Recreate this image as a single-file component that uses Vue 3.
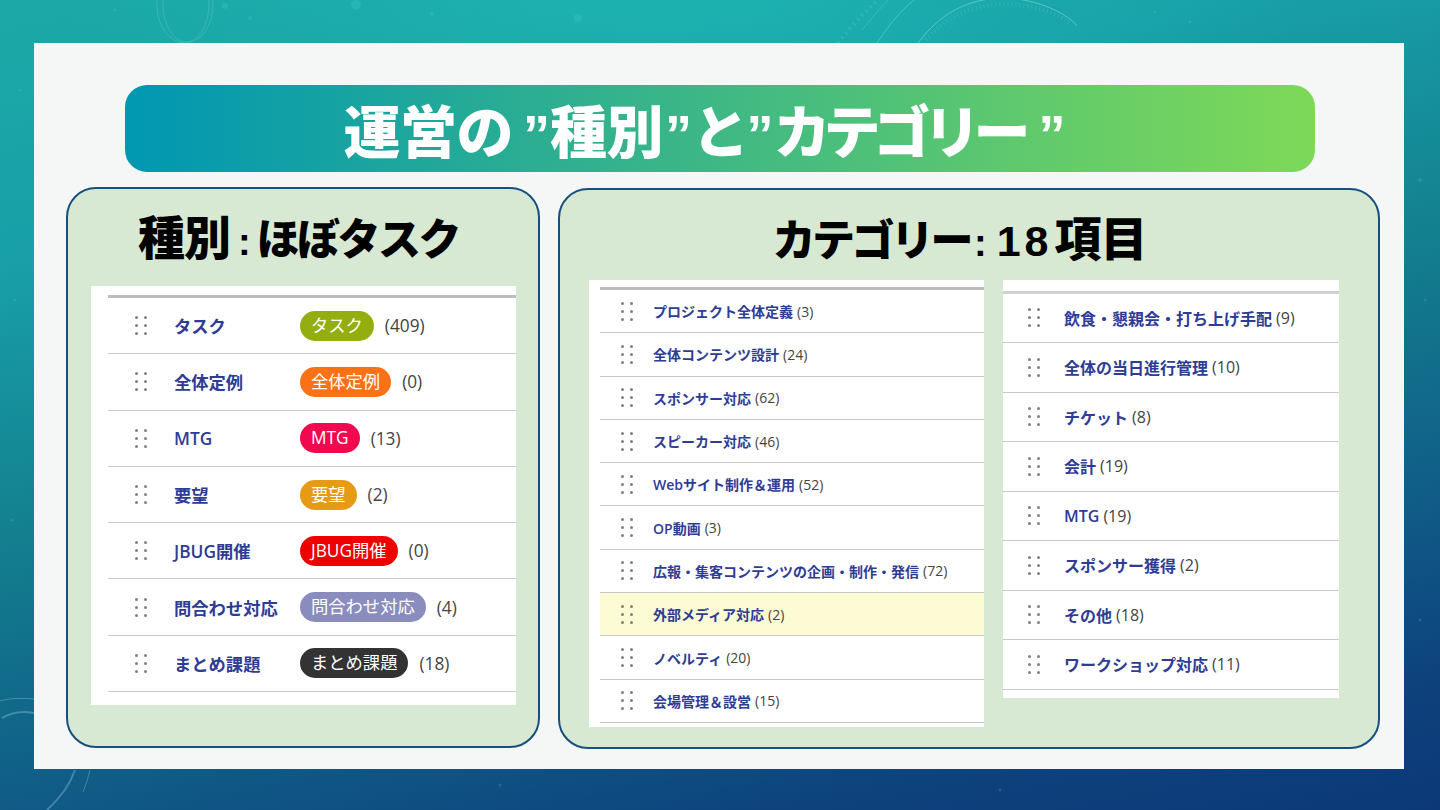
<script setup>
const kinds = [
  { name: 'タスク', color: '#93ae0e', count: 409 },
  { name: '全体定例', color: '#fb7216', count: 0 },
  { name: 'MTG', color: '#f0094f', count: 13 },
  { name: '要望', color: '#e59b14', count: 2 },
  { name: 'JBUG開催', color: '#ee0000', count: 0 },
  { name: '問合わせ対応', color: '#8a8cbd', count: 4 },
  { name: 'まとめ課題', color: '#333333', count: 18 }
]
const catsA = [
  ['プロジェクト全体定義', 3], ['全体コンテンツ設計', 24], ['スポンサー対応', 62], ['スピーカー対応', 46],
  ['Webサイト制作＆運用', 52], ['OP動画', 3], ['広報・集客コンテンツの企画・制作・発信', 72],
  ['外部メディア対応', 2], ['ノベルティ', 20], ['会場管理＆設営', 15]
]
const catsB = [
  ['飲食・懇親会・打ち上げ手配', 9], ['全体の当日進行管理', 10], ['チケット', 8], ['会計', 19],
  ['MTG', 19], ['スポンサー獲得', 2], ['その他', 18], ['ワークショップ対応', 11]
]
const specks = [
  [225, 6, 3], [356, 5, 5], [250, 18, 2], [115, 10, 1.5], [578, 18, 4], [432, 14, 2], [1390, 100, 1.5], [1425, 300, 1.5],
  [1420, 180, 2], [15, 300, 1.5], [20, 90, 1.5], [12, 520, 1.5], [1420, 620, 1.5], [1000, 790, 1.5], [500, 785, 1.5], [1155, 12, 1.5], [1190, 22, 1.5]
]
</script>

<template>
  <div class="slide">
    <svg class="deco" width="1440" height="810" viewBox="0 0 1440 810" fill="none" aria-hidden="true">
      <g stroke="#bff3ea" stroke-opacity=".18" stroke-width="1">
        <ellipse cx="185" cy="5" rx="28" ry="38" />
        <ellipse cx="186" cy="4" rx="23" ry="38" />
        <path d="M838 43C850 28 862 14 880 -2" stroke-dasharray="2 4" stroke-width="4" stroke-opacity=".12" />
        <path d="M877 43C892 20 905 6 922 -6" stroke-opacity=".3" />
        <path d="M862 30C872 18 880 8 890 -2" stroke-opacity=".2" />
        <path d="M918 43C940 14 965 0 1000 -2C1040 -2 1070 16 1077 26" stroke-opacity=".38" />
        <path d="M926 40C948 16 970 6 1000 4C1035 4 1060 14 1070 24" stroke-dasharray="1 3" stroke-width="4" stroke-opacity=".14" />
      </g>
      <g stroke="#bfe0f0" stroke-opacity=".3" fill="none">
        <path d="M0 701C10 698 22 698 34 699" />
        <path d="M2 718C12 712 24 711 34 713" stroke-width="2" />
        <path d="M75 770C70 785 60 798 47 810" stroke-width="2" />
        <path d="M90 770C88 778 86 785 83 792" />
      </g>
      <g fill="#4fd8d0" fill-opacity=".22">
        <circle v-for="(s, i) in specks" :key="i" :cx="s[0]" :cy="s[1]" :r="s[2]" />
      </g>
    </svg>
    <main class="panel">
      <h1 class="banner"><span class="banner-text">運営の<b class="q q-1">”</b>種別<b class="q q-2">”</b>と<b class="q q-3">”</b><span class="kata">カテゴリー</span><b class="q q-4">”</b></span></h1>
      <div class="cards">
        <section class="card card-left">
          <h2 class="card-title"><span class="kanji">種別</span><span class="colon">:</span>ほぼタスク</h2>
          <div class="shot shot-kinds">
            <ul class="list list-kinds">
              <li v-for="k in kinds" :key="k.name" class="row">
                <span class="grip"><i v-for="n in 6" :key="n"></i></span>
                <span class="name name-kind">{{ k.name }}</span>
                <span class="badge" :style="{ background: k.color }">{{ k.name }}</span>
                <span class="count count-kind">({{ k.count }})</span>
              </li>
            </ul>
          </div>
        </section>
        <section class="card card-right">
          <h2 class="card-title"><span class="kata-title">カテゴリー</span><span class="colon colon-r">:</span><span class="num">18</span><span class="kanji">項目</span></h2>
          <div class="shots">
            <div class="shot shot-a">
              <ul class="list list-a">
                <li v-for="c in catsA" :key="c[0]" class="row" :class="{ hot: c[0] === '外部メディア対応' }">
                  <span class="grip"><i v-for="n in 6" :key="n"></i></span>
                  <span class="name">{{ c[0] }}</span>
                  <span class="count">({{ c[1] }})</span>
                </li>
              </ul>
            </div>
            <div class="shot shot-b">
              <ul class="list list-b">
                <li v-for="c in catsB" :key="c[0]" class="row">
                  <span class="grip"><i v-for="n in 6" :key="n"></i></span>
                  <span class="name">{{ c[0] }}</span>
                  <span class="count">({{ c[1] }})</span>
                </li>
              </ul>
            </div>
          </div>
        </section>
      </div>
    </main>
  </div>
</template>

<style>
html, body { margin: 0; padding: 0; overflow: hidden; }
</style>

<style scoped>
* { box-sizing: border-box; }
.slide {
  position: relative;
  width: 1440px;
  height: 810px;
  overflow: hidden;
  padding: 43px 36px 41px 34px;
  background:
    radial-gradient(ellipse 620px 170px at 680px 0, rgba(32, 196, 186, .45), rgba(32, 196, 186, 0)),
    linear-gradient(168deg, #1ca9a6 0%, #189fa8 24%, #13808f 48%, #105f88 70%, #0d427d 88%, #0c3877 100%);
  font-family: "Open Sans", "Noto Sans CJK JP", sans-serif;
}
.deco { position: absolute; left: 0; top: 0; }
.panel {
  position: relative;
  width: 1370px;
  height: 726px;
  background: #f5f7f7;
  padding: 42px 24px 0 32px;
  display: flex;
  flex-direction: column;
}
.banner {
  flex: none;
  width: 1190px;
  height: 87px;
  margin: 0 0 15px 59px;
  border-radius: 22px;
  background: linear-gradient(90deg, #0097b2, #7ed957);
  display: flex;
  align-items: center;
  justify-content: center;
  color: #fff;
  font-family: "Noto Sans CJK JP", sans-serif;
  font-weight: 900;
  font-size: 57px;
  line-height: 1;
  white-space: nowrap;
}
.banner-text { letter-spacing: -.5px; padding-top: 4px; margin-left: -31px; }
.kata { letter-spacing: -7px; }
.q { font-family: "Liberation Sans", sans-serif; font-weight: 700; font-size: 54px; letter-spacing: 0; }
.q-1 { margin-left: 10px; }
.q-2 { margin-left: 2px; }
.q-3 { margin-left: -2px; }
.q-4 { margin-left: 15px; }
.cards { flex: none; display: flex; gap: 18px; align-items: flex-start; }
.card {
  background: #d8e9d3;
  border: 2px solid #17507f;
  border-radius: 30px;
  height: 561px;
  display: flex;
  flex-direction: column;
}
.card-left { width: 474px; padding: 0 22px 0 23px; }
.card-right { width: 822px; margin-top: 1px; padding: 0 39px 0 29px; }
.card-title {
  margin: 0;
  text-align: center;
  font-family: "Noto Sans CJK JP", sans-serif;
  font-weight: 900;
  color: #000;
  font-size: 43px;
  line-height: 44px;
  letter-spacing: -2.5px;
  white-space: nowrap;
}
.card-left .card-title { padding: 24px 10px 0 0; height: 97px; }
.card-right .card-title { padding: 24px 9px 0 0; height: 90px; }
.kanji { font-size: 47px; letter-spacing: -1px; }
.kata-title { letter-spacing: -3.5px; }
.colon { font-family: "Liberation Sans", sans-serif; font-weight: 700; font-size: 38px; margin: 0 6px 0 8px; letter-spacing: 0; }
.colon-r { margin: 0 10px 0 4px; }
.num { font-family: "Liberation Sans", sans-serif; font-weight: 700; letter-spacing: 4px; margin-right: 2px; }
.shots { display: flex; gap: 19px; align-items: flex-start; }
.shot { background: #fff; }
.shot-kinds { width: 425px; height: 419px; padding: 9px 0 0 17px; }
.shot-a { width: 395px; height: 447px; padding: 7px 0 0 11px; }
.shot-b { width: 336px; height: 418px; padding-top: 10.5px; }
.list { list-style: none; margin: 0; padding: 0; border-top: 3px solid #bcbcbc; }
.list-b { border-top-color: #d2d2d2; }
.row {
  display: flex;
  align-items: center;
  border-bottom: 1.5px solid #c6c8ca;
  color: #444;
}
.list-kinds .row { height: 56.3px; font-size: 17.3px; }
.list-a .row { height: 43.3px; font-size: 14px; }
.list-b .row { height: 49.5px; font-size: 16px; }
.hot { background: #fdfbd3; }
.grip {
  display: grid;
  grid-template-columns: 3px 3px;
  column-gap: 6px;
  row-gap: 5px;
  flex: none;
}
.grip i { width: 3px; height: 3px; border-radius: 50%; background: #7f7f7f; display: block; }
.list-kinds .grip { margin: 0 27px 0 27px; }
.list-a .grip { margin: 0 20px 0 21px; }
.list-b .grip { margin: 0 24px 0 25px; }
.name { color: #2e3c96; font-weight: 600; white-space: nowrap; margin-right: 4px; }
.name-kind { width: 126px; margin-right: 0; flex: none; }
.badge {
  color: #fff;
  border-radius: 15px;
  height: 30px;
  line-height: 29px;
  padding: 0 11px;
  white-space: nowrap;
  font-weight: 400;
}
.count { color: #444; white-space: nowrap; }
.count-kind { margin-left: 11px; }
</style>
